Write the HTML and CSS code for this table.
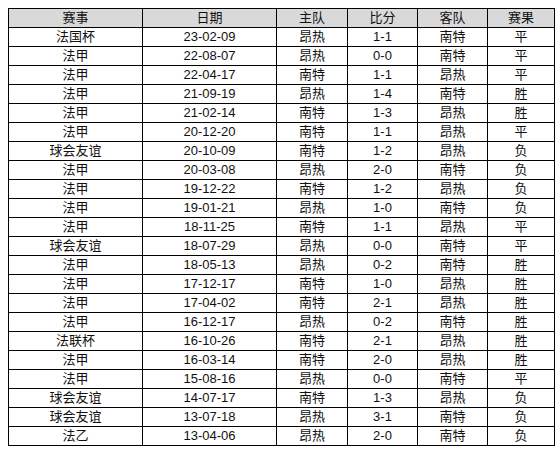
FILE: index.html
```html
<!DOCTYPE html>
<html>
<head>
<meta charset="utf-8">
<link rel="stylesheet" href="styles.css">
</head>
<body>
<table class="results">
<colgroup>
<col class="c-comp"><col class="c-date"><col class="c-home"><col class="c-score"><col class="c-away"><col class="c-res">
</colgroup>
<thead>
<tr><th>赛事</th><th>日期</th><th>主队</th><th>比分</th><th>客队</th><th>赛果</th></tr>
</thead>
<tbody>
<tr><td>法国杯</td><td>23-02-09</td><td>昂热</td><td>1-1</td><td>南特</td><td>平</td></tr>
<tr><td>法甲</td><td>22-08-07</td><td>昂热</td><td>0-0</td><td>南特</td><td>平</td></tr>
<tr><td>法甲</td><td>22-04-17</td><td>南特</td><td>1-1</td><td>昂热</td><td>平</td></tr>
<tr><td>法甲</td><td>21-09-19</td><td>昂热</td><td>1-4</td><td>南特</td><td>胜</td></tr>
<tr><td>法甲</td><td>21-02-14</td><td>南特</td><td>1-3</td><td>昂热</td><td>胜</td></tr>
<tr><td>法甲</td><td>20-12-20</td><td>南特</td><td>1-1</td><td>昂热</td><td>平</td></tr>
<tr><td>球会友谊</td><td>20-10-09</td><td>南特</td><td>1-2</td><td>昂热</td><td>负</td></tr>
<tr><td>法甲</td><td>20-03-08</td><td>昂热</td><td>2-0</td><td>南特</td><td>负</td></tr>
<tr><td>法甲</td><td>19-12-22</td><td>南特</td><td>1-2</td><td>昂热</td><td>负</td></tr>
<tr><td>法甲</td><td>19-01-21</td><td>昂热</td><td>1-0</td><td>南特</td><td>负</td></tr>
<tr><td>法甲</td><td>18-11-25</td><td>南特</td><td>1-1</td><td>昂热</td><td>平</td></tr>
<tr><td>球会友谊</td><td>18-07-29</td><td>昂热</td><td>0-0</td><td>南特</td><td>平</td></tr>
<tr><td>法甲</td><td>18-05-13</td><td>昂热</td><td>0-2</td><td>南特</td><td>胜</td></tr>
<tr><td>法甲</td><td>17-12-17</td><td>南特</td><td>1-0</td><td>昂热</td><td>胜</td></tr>
<tr><td>法甲</td><td>17-04-02</td><td>南特</td><td>2-1</td><td>昂热</td><td>胜</td></tr>
<tr><td>法甲</td><td>16-12-17</td><td>昂热</td><td>0-2</td><td>南特</td><td>胜</td></tr>
<tr><td>法联杯</td><td>16-10-26</td><td>南特</td><td>2-1</td><td>昂热</td><td>胜</td></tr>
<tr><td>法甲</td><td>16-03-14</td><td>南特</td><td>2-0</td><td>昂热</td><td>胜</td></tr>
<tr><td>法甲</td><td>15-08-16</td><td>昂热</td><td>0-0</td><td>南特</td><td>平</td></tr>
<tr><td>球会友谊</td><td>14-07-17</td><td>南特</td><td>1-3</td><td>昂热</td><td>负</td></tr>
<tr><td>球会友谊</td><td>13-07-18</td><td>昂热</td><td>3-1</td><td>南特</td><td>负</td></tr>
<tr><td>法乙</td><td>13-04-06</td><td>昂热</td><td>2-0</td><td>南特</td><td>负</td></tr>
</tbody>
</table>
</body>
</html>
```

FILE: styles.css
```css
html, body {
  margin: 0;
  padding: 0;
  background: #ffffff;
}
body {
  padding: 8px;
}
.results {
  border-collapse: collapse;
  table-layout: fixed;
  width: 546px;
  font-family: "Liberation Sans", "Noto Sans CJK SC", sans-serif;
  font-size: 13px;
  color: #111111;
}
.c-comp { width: 134px; }
.c-date { width: 134px; }
.c-home { width: 71px; }
.c-score { width: 70px; }
.c-away { width: 70px; }
.c-res { width: 67px; }
.results th,
.results td {
  border: 1px solid #000000;
  height: 18px;
  padding: 0;
  text-align: center;
  vertical-align: middle;
  line-height: 18px;
  font-weight: normal;
  white-space: nowrap;
  overflow: hidden;
}
.results thead th {
  background: #d9d9d9;
}
```
